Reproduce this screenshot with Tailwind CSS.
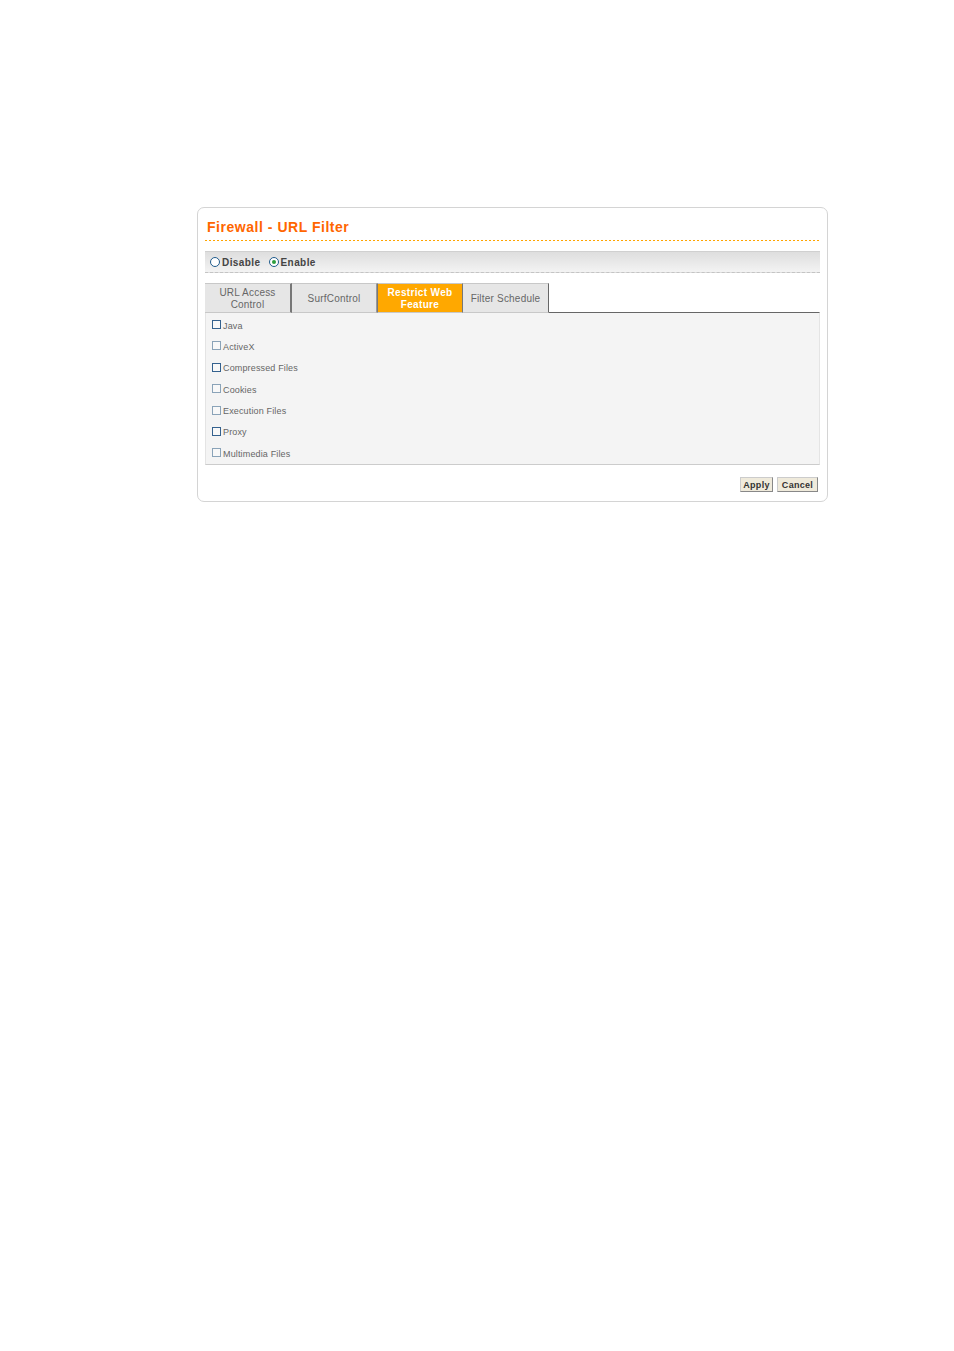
<!DOCTYPE html>
<html lang="en">
<head>
    <meta charset="UTF-8">
    <title>Firewall - URL Filter</title>
    <script src="https://cdn.jsdelivr.net/npm/@tailwindcss/browser@4"></script>
</head>
<body class="bg-white font-['Liberation_Sans',Arial,sans-serif]">
    <div class="w-[954px] h-[1351px] pt-[207px] pl-[197px]">
        <div class="w-[631px] h-[295px] border border-[#d4d4d4] rounded-[7px] px-[7px] bg-white">
            <!-- Title -->
            <h1 class="h-[32px] pt-[10px] pl-[2px] text-[14px] leading-[19px] font-bold tracking-[0.53px] text-[#ff6600]">Firewall - URL Filter</h1>
            <div class="h-px bg-[repeating-linear-gradient(90deg,#ffa500_0,#ffa500_2px,transparent_2px,transparent_4px)]"></div>

            <!-- Disable / Enable -->
            <div class="mt-[10px] h-[22px] flex items-center pl-[5px] border-t border-[#d0d0d0] border-b border-b-[#c4c4c4] border-dashed [border-top-style:solid] bg-gradient-to-b from-[#dedede] to-[#f3f3f3] text-[10px] font-bold tracking-[0.42px] text-[#444]">
                <span class="w-[10px] h-[10px] rounded-full border border-[#1f5b8c] bg-white"></span>
                <span class="ml-[2px]">Disable</span>
                <span class="ml-[8px] w-[10px] h-[10px] rounded-full border border-[#1f5b8c] bg-white flex items-center justify-center">
                    <span class="w-[4px] h-[4px] rounded-full bg-[#2e9e3e]"></span>
                </span>
                <span class="ml-[2px]">Enable</span>
            </div>

            <!-- Tabs -->
            <div class="relative z-10 mt-[10px] -mb-px flex h-[30px] text-[10px] leading-[11.5px] tracking-[0.2px] text-[#666] text-center">
                <div class="w-[87px] pt-px flex items-center justify-center bg-[#e6e6e6] border-t border-b border-[#c8c8c8] border-r-2 border-r-[#777]">URL Access<br>Control</div>
                <div class="w-[85px] pt-px flex items-center justify-center bg-[#e6e6e6] border-t border-b border-[#c8c8c8] border-r border-r-[#999]">SurfControl</div>
                <div class="w-[86px] pt-px flex items-center justify-center bg-[#ffa800] border-t border-b border-[#c8c8c8] border-x border-x-[#777] font-bold tracking-[0.35px] text-white">Restrict Web<br>Feature</div>
                <div class="w-[86px] pt-px flex items-center justify-center bg-[#e6e6e6] border-t border-b border-[#c8c8c8] border-r border-r-[#666]">Filter Schedule</div>
            </div>

            <!-- Features -->
            <div class="h-[153px] bg-[#f4f4f4] border-t border-[#666] border-b border-b-[#ccc] border-x border-x-[#e4e4e4] pl-[6px] pt-[7px] flex flex-col gap-[12.4px] text-[9px] leading-[9px] tracking-[0.15px] text-[#666]">
                <label class="flex items-center gap-[2px] h-[9px]"><span class="w-[9px] h-[9px] border border-[#34618e] bg-[#f8f8f8]"></span><span class="mt-[3px]">Java</span></label>
                <label class="flex items-center gap-[2px] h-[9px]"><span class="w-[9px] h-[9px] border border-[#8aa3b8] bg-[#f8f8f8]"></span><span class="mt-[3px]">ActiveX</span></label>
                <label class="flex items-center gap-[2px] h-[9px]"><span class="w-[9px] h-[9px] border border-[#34618e] bg-[#f8f8f8]"></span><span class="mt-[3px]">Compressed Files</span></label>
                <label class="flex items-center gap-[2px] h-[9px]"><span class="w-[9px] h-[9px] border border-[#8aa3b8] bg-[#f8f8f8]"></span><span class="mt-[3px]">Cookies</span></label>
                <label class="flex items-center gap-[2px] h-[9px]"><span class="w-[9px] h-[9px] border border-[#8aa3b8] bg-[#f8f8f8]"></span><span class="mt-[3px]">Execution Files</span></label>
                <label class="flex items-center gap-[2px] h-[9px]"><span class="w-[9px] h-[9px] border border-[#34618e] bg-[#f8f8f8]"></span><span class="mt-[3px]">Proxy</span></label>
                <label class="flex items-center gap-[2px] h-[9px]"><span class="w-[9px] h-[9px] border border-[#8aa3b8] bg-[#f8f8f8]"></span><span class="mt-[3px]">Multimedia Files</span></label>
            </div>

            <!-- Buttons -->
            <div class="mt-[12px] flex justify-end gap-[4px] pr-[2px] text-[9px] tracking-[0.3px] text-[#333]">
                <button class="w-[33px] h-[15px] pt-px bg-[#efeadb] border border-[#ccc] border-r-[#888] border-b-[#888] font-bold">Apply</button>
                <button class="w-[41px] h-[15px] pt-px bg-[#efeadb] border border-[#ccc] border-r-[#888] border-b-[#888] font-bold">Cancel</button>
            </div>
        </div>
    </div>
</body>
</html>
